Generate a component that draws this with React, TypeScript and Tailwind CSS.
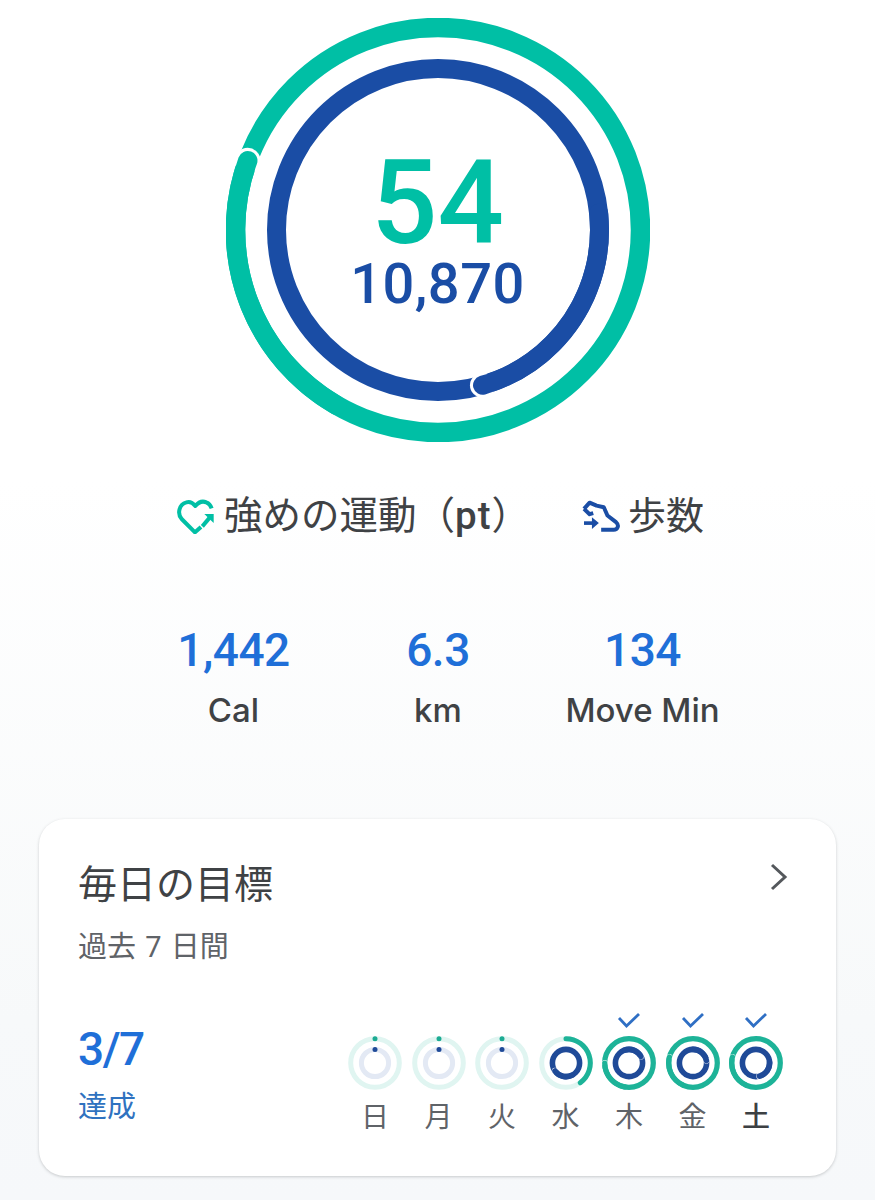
const sans = "font-['Roboto','Noto_Sans_CJK_JP',sans-serif]";

const TEAL = '#00bfa5';
const BLUE = '#1a4da5';

// point on a ring, angle in degrees clockwise from 12 o'clock
function pt(cx: number, cy: number, r: number, deg: number) {
  const a = (deg * Math.PI) / 180;
  return [cx + r * Math.sin(a), cy - r * Math.cos(a)];
}

function arc(cx: number, cy: number, r: number, from: number, to: number) {
  const [x1, y1] = pt(cx, cy, r, from);
  const [x2, y2] = pt(cx, cy, r, to);
  const large = to - from > 180 ? 1 : 0;
  return `M${x1} ${y1}A${r} ${r} 0 ${large} 1 ${x2} ${y2}`;
}

function Ring({ cx, cy, r, w, color, end, halo = 0.16 }: { cx: number; cy: number; r: number; w: number; color: string; end: number; halo?: number }) {
  const [hx, hy] = pt(cx, cy, r, end);
  return (
    <g fill="none">
      <circle cx={cx} cy={cy} r={r} stroke={color} strokeWidth={w} />
      <circle cx={hx} cy={hy} r={w / 2 + w * halo} fill="#fff" />
      <path d={arc(cx, cy, r, end - 80, end)} stroke={color} strokeWidth={w} strokeLinecap="round" />
    </g>
  );
}

function HeartIcon() {
  return (
    <svg width="37" height="35" viewBox="24 28 111 105" fill="none" className="shrink-0">
      <path d="M96 112 L78 128 L38 88 C24 72 30 44 52 38 C62 35 72 40 79 49 C88 38 100 33 112 38 C120 41 125 47 128 56" stroke={TEAL} strokeWidth="12" strokeLinejoin="round" />
      <path d="M100 110 L122 84" stroke={TEAL} strokeWidth="12" />
      <path d="M106 73 H134 V100 Z" fill={TEAL} />
    </svg>
  );
}

function StepsIcon() {
  return (
    <svg width="38" height="33" viewBox="24 33 115 100" fill="none" className="shrink-0">
      <path d="M30 60 L47 41 L68 50 L90 55 L101 80 L127 100 C138 110 132 123 120 123 H82" stroke={BLUE} strokeWidth="12" strokeLinejoin="round" />
      <path d="M30 60 L47 76 L58 73" stroke={BLUE} strokeWidth="12" strokeLinejoin="round" />
      <path d="M30 103 H58" stroke={BLUE} strokeWidth="11" />
      <path d="M54 85 L75 103 L54 121 Z" fill={BLUE} />
    </svg>
  );
}

function Stat({ value, label, className }: { value: string; label: string; className: string }) {
  return (
    <div className={`flex flex-col items-center ${className}`}>
      <span className="text-[46px] leading-[54px] font-medium tracking-[-0.5px] text-[#1f6fd8]">{value}</span>
      <span className="mt-[13px] font-['Inter',sans-serif] text-[33px] leading-[40px] font-medium whitespace-nowrap text-[#3f4245]">{label}</span>
    </div>
  );
}

const days = [
  { d: '日', outer: 0, inner: 0 },
  { d: '月', outer: 0, inner: 0 },
  { d: '火', outer: 0, inner: 0 },
  { d: '水', outer: 0.4, inner: 1.65 },
  { d: '木', outer: 1.75, inner: 1.17 },
  { d: '金', outer: 1.79, inner: 1.22 },
  { d: '土', outer: 1.79, inner: 1.46 },
];

function DayRing({ outer, inner }: { outer: number; inner: number }) {
  const c = 27;
  const oR = 24.3;
  const iR = 13.6;
  const done = inner >= 1;
  return (
    <svg width="54" height="54" viewBox="0 0 54 54" fill="none">
      <circle cx={c} cy={c} r={oR} stroke="#e0f5f1" strokeWidth="5" />
      {!done && <circle cx={c} cy={c} r={iR} stroke="#e3e9f4" strokeWidth="5" />}
      {outer === 0 && <circle cx={c} cy={c - oR} r="2.500" fill="#1cab93" />}
      {inner === 0 && <circle cx={c} cy={c - iR} r="2.500" fill="#1f4a98" />}
      {outer > 0 && outer < 1 && <path d={arc(c, c, oR, 0, outer * 360)} stroke="#1db398" strokeWidth="5" strokeLinecap="round" />}
      {outer >= 1 && <Ring cx={c} cy={c} r={oR} w={5.2} color="#1db398" end={(outer - 1) * 360} halo={0.06} />}
      {done && <Ring cx={c} cy={c} r={iR} w={5.6} color="#1f4a98" end={(inner - 1) * 360} halo={0.06} />}
    </svg>
  );
}

export default function App() {
  return (
    <div className={`${sans} h-[1200px] w-[875px] overflow-hidden bg-[linear-gradient(180deg,#ffffff_0%,#ffffff_40%,#f7f9fa_85%,#f6f8fa_100%)]`}>
      <div className="relative mx-auto mt-[18px] h-[424px] w-[424px]">
        <svg width="424" height="424" viewBox="0 0 424 424" fill="none">
          <Ring cx={212} cy={212} r={202.5} w={19.5} color={TEAL} end={290} />
          <Ring cx={212} cy={212} r={161.5} w={19} color={BLUE} end={164} />
        </svg>
        <div className="absolute inset-0 flex flex-col items-center pt-[137px]">
          <span className="text-[117px] leading-[97px] font-medium text-[#00bfa5]">54</span>
          <span className="mt-[4px] text-[56px] leading-[56px] font-medium tracking-[0.5px] text-[#1a4da5]">10,870</span>
        </div>
      </div>

      <div className="mt-[51px] flex h-[46px] items-center pl-[177px] text-[38.5px] leading-[46px] text-[#3f4245]">
        <HeartIcon />
        <span className="ml-[10px]">強めの運動（<span className="font-medium tracking-[1px]">pt</span>）</span>
        <span className="ml-[52px]"><StepsIcon /></span>
        <span className="ml-[8px] text-[38px]">歩数</span>
      </div>

      <div className="mt-[84px] flex pl-[177px]">
        <Stat value="1,442" label="Cal" className="w-[113px]" />
        <Stat value="6.3" label="km" className="ml-[116px] w-[64px]" />
        <Stat value="134" label="Move Min" className="ml-[94px] w-[157px]" />
      </div>

      <div className="mx-[39px] mt-[89px] h-[357px] rounded-[26px] bg-white px-[39px] shadow-[0_1px_3px_rgba(60,64,67,0.25)]">
        <div className="flex items-center justify-between pt-[42px]">
          <span className="text-[39px] leading-[48px] text-[#3f4245]">毎日の目標</span>
          <svg width="24" height="32" viewBox="0 0 24 32" fill="none" className="mt-[-16px] mr-[6px]">
            <path d="M5 4 L18 16 L5 28" stroke="#54585c" strokeWidth="3" />
          </svg>
        </div>
        <div className="mt-[22px] text-[29px] leading-[32px] [word-spacing:2px] text-[#5f6368]">過去 7 日間</div>
        <div className="mt-[43px] flex justify-between">
          <div className="pt-[16px]">
            <div className="text-[46px] leading-[54px] font-medium tracking-[-1.5px] text-[#1f6fd8]">3/7</div>
            <div className="mt-[13px] text-[29px] leading-[36px] text-[#2f72c0]">達成</div>
          </div>
          <div className="mr-[14px] flex gap-[9.500px]">
            {days.map((day, i) => (
              <div key={day.d} className="flex w-[54px] flex-col items-center">
                <div className="flex h-[30px] items-center">
                  {day.outer >= 1 && (
                    <svg width="24" height="18" viewBox="0 0 24 18" fill="none">
                      <path d="M2 6 L9.500 14 L22 2" stroke="#2f6fc4" strokeWidth="2.800" />
                    </svg>
                  )}
                </div>
                <DayRing outer={day.outer} inner={day.inner} />
                <span className={`mt-[10px] text-[28px] leading-[36px] ${i === 6 ? 'font-medium text-[#3c4043]' : 'text-[#5f6368]'}`}>{day.d}</span>
              </div>
            ))}
          </div>
        </div>
      </div>
    </div>
  );
}
